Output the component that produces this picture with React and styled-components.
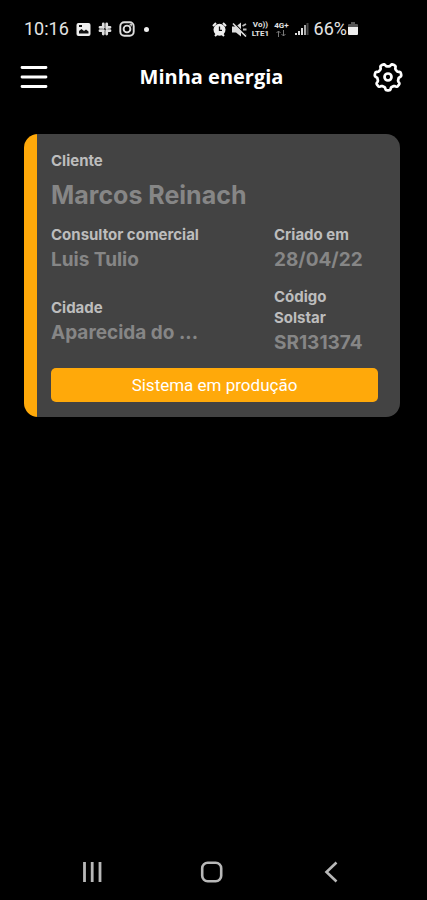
import styled, { createGlobalStyle } from "styled-components";

const client = {
  name: "Marcos Reinach",
  consultant: "Luis Tulio",
  createdAt: "28/04/22",
  city: "Aparecida do ...",
  code: "SR131374",
  status: "Sistema em produção",
};

// outline of the settings gear: seven rounded teeth, one pointing down
const gearPath = () => {
  const points = [];
  for (let deg = 0; deg < 360; deg += 3) {
    const a = (deg * Math.PI) / 180;
    const wave = Math.cos(7 * (a - Math.PI / 2));
    const r = 12 + 1.4 * Math.tanh(2.4 * wave);
    points.push(`${(15 + r * Math.cos(a)).toFixed(2)} ${(15 + r * Math.sin(a)).toFixed(2)}`);
  }
  return `M${points.join("L")}Z`;
};

const StatusBar = () => (
  <Status>
    <StatusGroup $gap={7}>
      <Clock>10:16</Clock>
      <svg width="15" height="15" viewBox="0 0 15 15">
        <rect x="0.500" y="1" width="14" height="13" rx="2" fill="#eee" />
        <path d="M3 11.500V9l2.500-2 2.500 2 2-1.500 2.500 2v2z" fill="#111" />
        <path d="M3 3h3v2H3z" fill="#111" />
      </svg>
      <svg width="14" height="14" viewBox="0 0 14 14" stroke="#ddd" strokeWidth="2.800" strokeLinecap="round">
        <path d="M5.300 2v3.500M8.700 2v4M2 8.700h3.500M8.700 8.700H12M5.300 8.700V12M8.700 9v3M2 5.300h3.500M9 5.300h3" />
      </svg>
      <svg width="16" height="16" viewBox="0 0 16 16" fill="none" stroke="#ddd" strokeWidth="1.900">
        <rect x="1.300" y="1.300" width="13.400" height="13.400" rx="4" />
        <circle cx="8" cy="8" r="3.400" />
        <circle cx="11.800" cy="4.200" r=".4" />
      </svg>
      <Dot />
    </StatusGroup>
    <StatusGroup $gap={5}>
      <svg width="15" height="15" viewBox="0 0 15 15">
        <path d="M1 4l3-3M14 4l-3-3M3 14l2-2M12 14l-2-2" stroke="#eee" strokeWidth="2" />
        <circle cx="7.500" cy="7.800" r="6" fill="#eee" />
        <path d="M7.500 4.500v3.800H10" fill="none" stroke="#111" strokeWidth="1.300" />
      </svg>
      <svg width="15" height="15" viewBox="0 0 15 15">
        <path d="M0 4.500h4l5-4v14l-5-4H0z" fill="#ddd" />
        <path d="M10.500 4l3.500-2M11 7.500h3.500M10.500 11l3.500 2" stroke="#bbb" strokeWidth="1.800" />
        <path d="M1 0l14 14" stroke="#000" strokeWidth="1.200" />
        <path d="M1 1.500l13 13" stroke="#ddd" strokeWidth="1.600" />
      </svg>
      <Network>
        <span>Vo))</span>
        <span>LTE1</span>
      </Network>
      <Network>
        <span>4G+</span>
        <svg width="12" height="8" viewBox="0 0 12 8" fill="none" stroke="#777">
          <path d="M3.500 7V1M1.500 3l2-2 2 2M8.500 0v6M6.500 4l2 2 2-2" />
        </svg>
      </Network>
      <svg width="15" height="14" viewBox="0 0 15 14">
        <path d="M1 11h2v2H1zM4 9h2v4H4zM7 6h2v7H7z" fill="#ddd" />
        <path d="M10 3h2v10h-2z" fill="#aaa" />
        <path d="M12.500 1h2v12h-2z" fill="#444" />
      </svg>
      <Battery>
        66%
        <svg width="12" height="14" viewBox="0 0 12 14">
          <path d="M4 0h4v2h2q1 0 1 1v2H1V3q0-1 1-1h2z" fill="#555" />
          <path d="M1 5h10v7q0 1-1 1H2q-1 0-1-1z" fill="#eee" />
        </svg>
      </Battery>
    </StatusGroup>
  </Status>
);

const Info = ({ label, value, narrow }) => (
  <InfoItem>
    <Label $narrow={narrow}>{label}</Label>
    <Value>{value}</Value>
  </InfoItem>
);

const App = () => {
  return (
    <Screen>
      <GlobalStyle />
      <StatusBar />
      <Header>
        <IconButton aria-label="Menu">
          <svg width="28" height="24" viewBox="0 0 28 24" stroke="#fff" strokeWidth="2.800" strokeLinecap="round">
            <path d="M2 2.500h24M2 12h24M2 21.500h24" />
          </svg>
        </IconButton>
        <Title>Minha energia</Title>
        <IconButton aria-label="Configurações">
          <svg width="30" height="30" viewBox="0 0 30 30" fill="none" stroke="#fff" strokeWidth="2.700" strokeLinejoin="round">
            <path d={gearPath()} />
            <circle cx="15" cy="15" r="3.500" />
          </svg>
        </IconButton>
      </Header>
      <Main>
        <Card>
          <Label>Cliente</Label>
          <Name>{client.name}</Name>
          <InfoGrid>
            <Info label="Consultor comercial" value={client.consultant} />
            <Info label="Criado em" value={client.createdAt} />
            <Info label="Cidade" value={client.city} />
            <Info label="Código Solstar" value={client.code} narrow />
          </InfoGrid>
          <ProductionButton>{client.status}</ProductionButton>
        </Card>
      </Main>
      <NavBar>
        <IconButton aria-label="Recentes">
          <svg width="24" height="24" viewBox="0 0 24 24" stroke="#b8b8b8" strokeWidth="2.800">
            <path d="M4.500 2v20M12.200 2v20M20 2v20" />
          </svg>
        </IconButton>
        <IconButton aria-label="Início">
          <svg width="24" height="24" viewBox="0 0 24 24" fill="none" stroke="#b8b8b8" strokeWidth="2.600">
            <rect x="2.200" y="2.700" width="19" height="18.600" rx="5.500" />
          </svg>
        </IconButton>
        <IconButton aria-label="Voltar">
          <svg width="24" height="24" viewBox="0 0 24 24" fill="none" stroke="#b8b8b8" strokeWidth="2.600">
            <path d="M17.500 2.500L7.500 12l10 9.500" />
          </svg>
        </IconButton>
      </NavBar>
    </Screen>
  );
};

export default App;

const GlobalStyle = createGlobalStyle`
  * {
    box-sizing: border-box;
  }

  body {
    margin: 0;
    background: #000;
    font-family: Inter, sans-serif;
  }
`;

const Screen = styled.div`
  display: flex;
  flex-direction: column;
  min-height: 100vh;
  background: #000;
  color: #fff;
`;

const Status = styled.div`
  display: flex;
  justify-content: space-between;
  align-items: center;
  height: 50px;
  padding: 8px 68px 0 24px;
  font-family: Roboto, sans-serif;
  color: #e4e4e4;
`;

const StatusGroup = styled.div`
  display: flex;
  align-items: center;
  gap: ${(props) => props.$gap}px;
`;

const Clock = styled.span`
  font-size: 18px;
  line-height: 20px;
`;

const Dot = styled.span`
  width: 5px;
  height: 5px;
  margin-left: 2px;
  border-radius: 50%;
  background: #eee;
`;

const Network = styled.span`
  display: flex;
  flex-direction: column;
  align-items: center;
  font-size: 8px;
  font-weight: 700;
  line-height: 9px;
`;

const Battery = styled.span`
  display: flex;
  align-items: center;
  font-size: 18px;
  line-height: 20px;
`;

const Header = styled.header`
  display: grid;
  grid-template-columns: 30px 1fr 30px;
  align-items: center;
  height: 54px;
  padding: 0 24px 0 20px;
`;

const IconButton = styled.button`
  display: flex;
  padding: 0;
  border: none;
  background: none;
  cursor: pointer;
`;

const Title = styled.h1`
  margin: 0;
  font-family: "Open Sans", sans-serif;
  font-size: 20px;
  font-weight: 700;
  line-height: 28px;
  text-align: center;
`;

const Main = styled.main`
  flex: 1;
  padding: 30px 27px 30px 24px;
`;

const Card = styled.section`
  display: flex;
  flex-direction: column;
  padding: 16px 22px 15px 27px;
  border-radius: 14px;
  background: linear-gradient(to right, #ffa90a 13px, #434343 13px);
`;

const Label = styled.span`
  max-width: ${(props) => (props.$narrow ? "80px" : "none")};
  color: #bdbdbd;
  font-size: 15px;
  font-weight: 700;
  line-height: 21px;
`;

const Name = styled.h2`
  margin: 6px 0 11px;
  color: #868686;
  font-size: 25px;
  font-weight: 700;
  line-height: 36px;
`;

const InfoGrid = styled.div`
  display: grid;
  grid-template-columns: 1fr 104px;
  align-items: center;
  row-gap: 12px;
`;

const InfoItem = styled.div`
  display: flex;
  flex-direction: column;
  gap: 1px;
`;

const Value = styled.span`
  color: #868686;
  font-size: 19px;
  font-weight: 700;
  line-height: 28px;
`;

const ProductionButton = styled.button`
  height: 34px;
  margin-top: 11px;
  padding: 0;
  border: none;
  border-radius: 5px;
  background: #ffa90a;
  color: #fff;
  font-family: Roboto, sans-serif;
  font-size: 17px;
  line-height: 20px;
  cursor: pointer;
`;

const NavBar = styled.nav`
  display: flex;
  justify-content: space-between;
  align-items: center;
  height: 56px;
  padding: 0 84px 0 80px;
`;
